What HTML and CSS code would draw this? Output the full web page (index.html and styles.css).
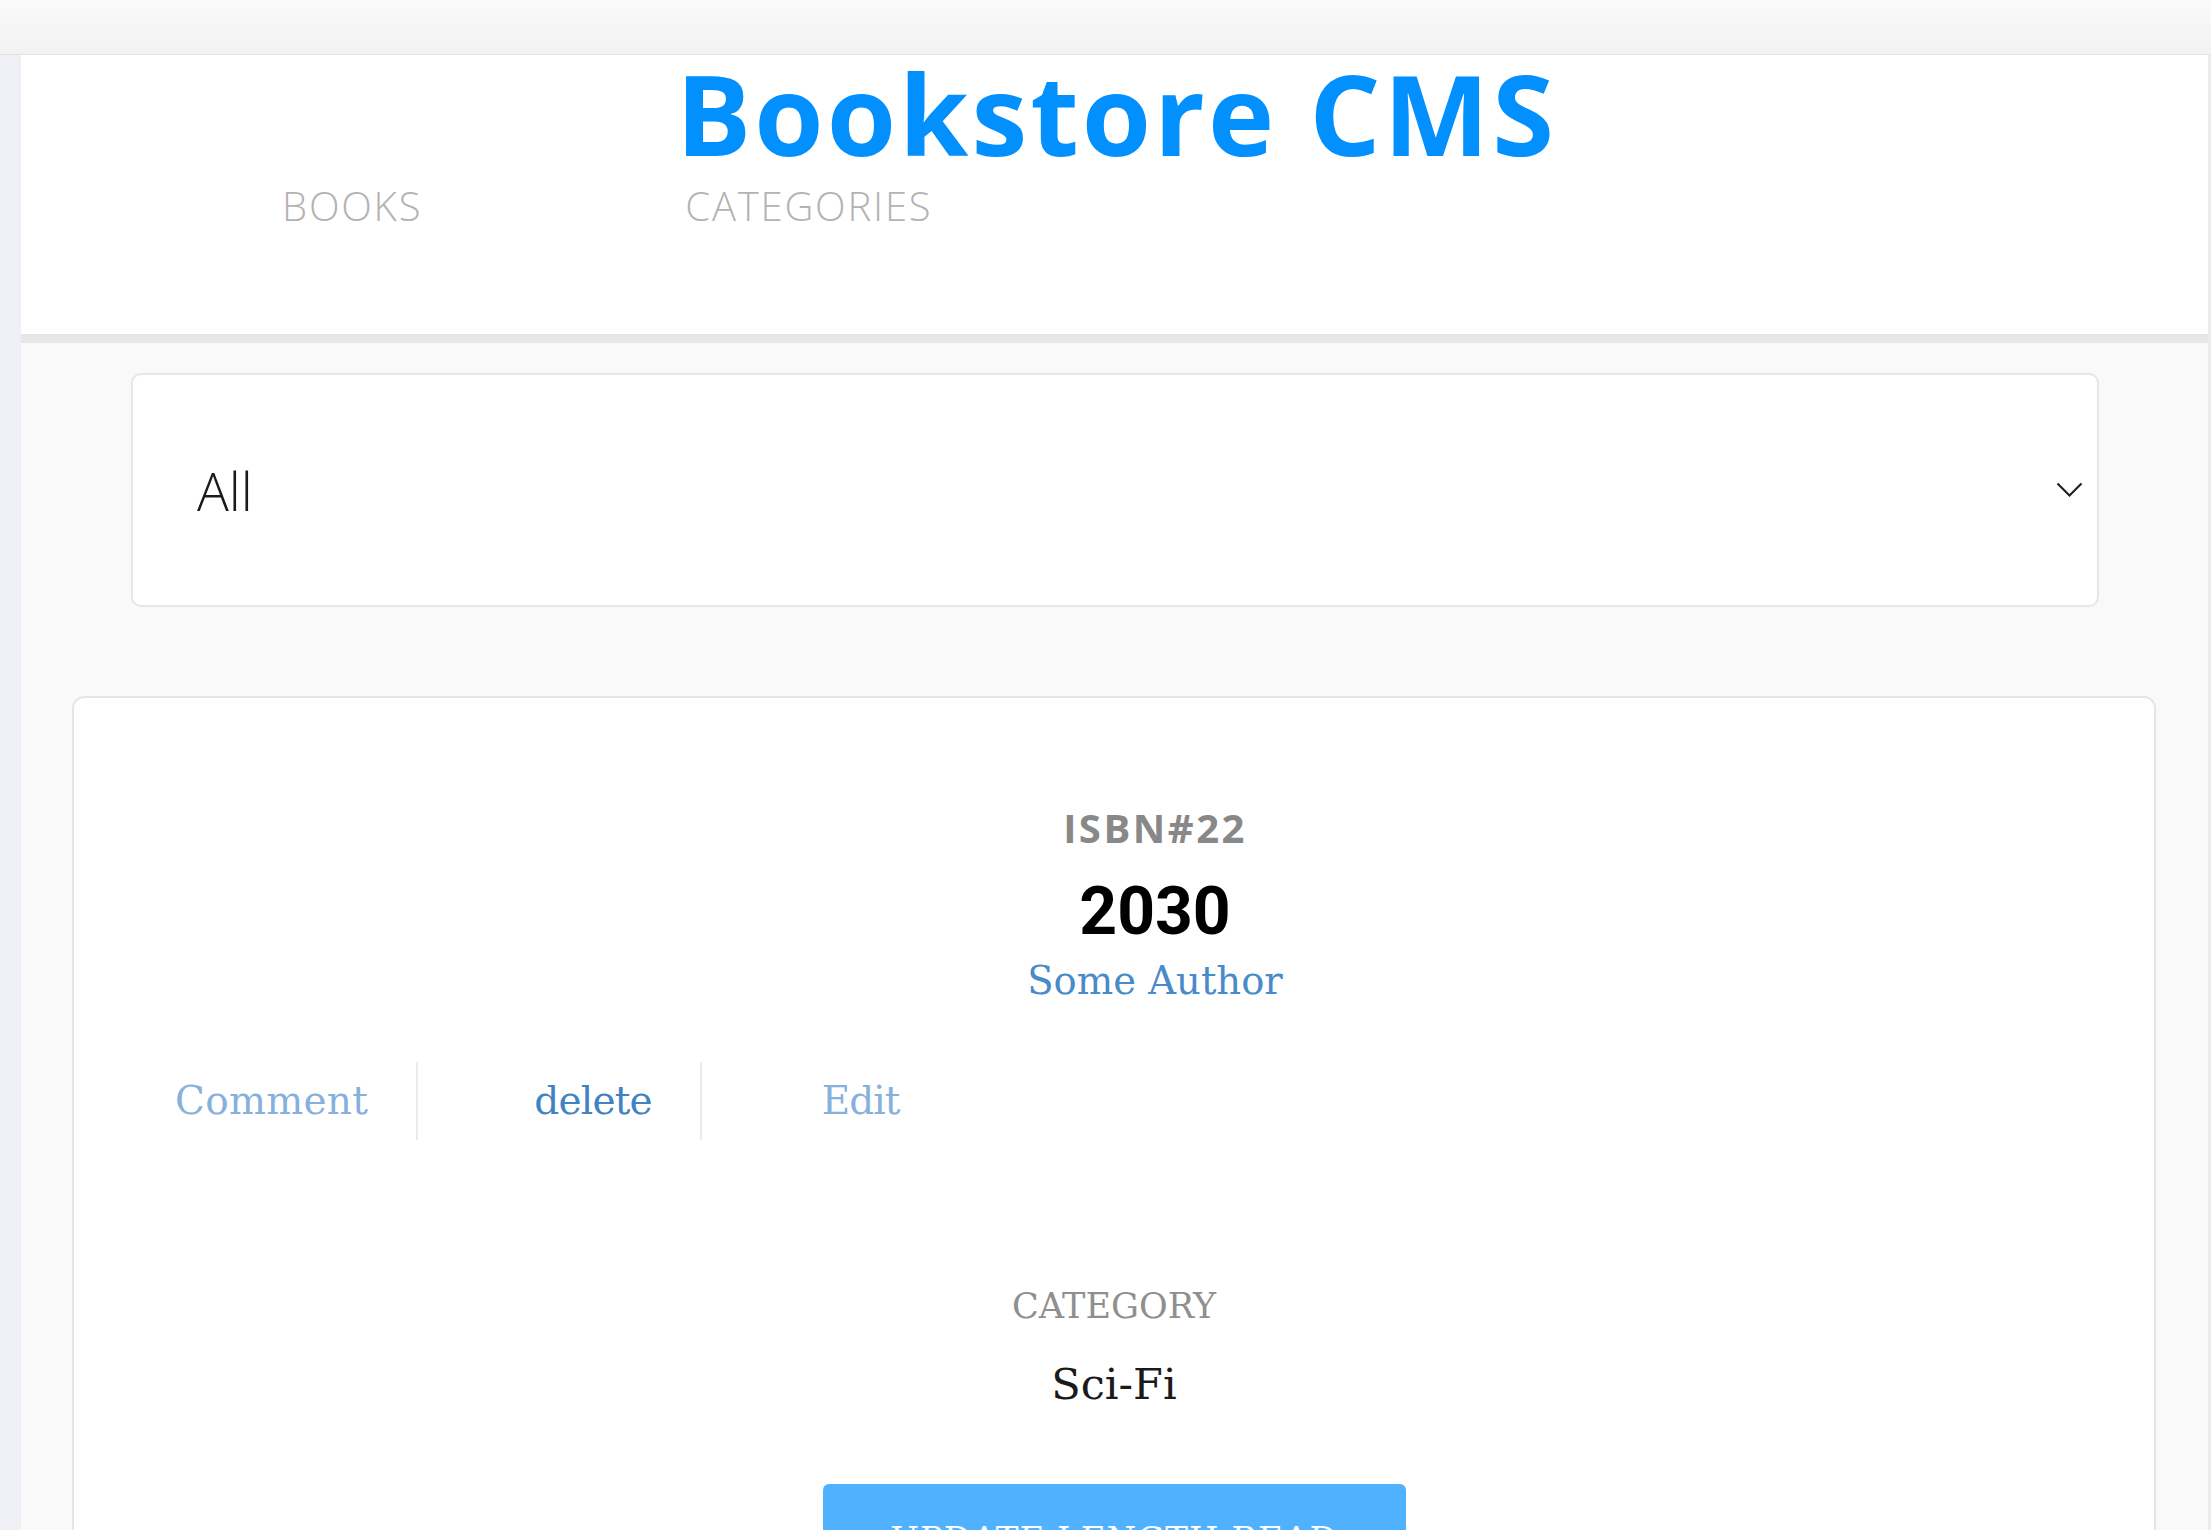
FILE: index.html
```html
<!DOCTYPE html>
<html lang="en">
<head>
<meta charset="utf-8">
<title>Bookstore CMS</title>
<link rel="stylesheet" href="styles.css">
</head>
<body>
<div class="topbar"></div>
<div class="frame">
  <div class="side-strip"></div>
  <div class="page">
    <header class="header">
      <h1 class="title">Bookstore CMS</h1>
      <nav class="nav">
        <a class="nav-link" href="#">BOOKS</a>
        <a class="nav-link" href="#">CATEGORIES</a>
      </nav>
    </header>
    <main class="main">
      <div class="select">
        <span class="select-value">All</span>
        <svg class="chevron" width="27" height="16" viewBox="0 0 27 16"><path d="M1.5 1.5 L13.5 13.5 L25.5 1.5" fill="none" stroke="#222" stroke-width="2.2"/></svg>
      </div>
      <section class="card">
        <div class="book-info">
          <div class="isbn">ISBN#22</div>
          <div class="book-title">2030</div>
          <div class="author">Some Author</div>
        </div>
        <ul class="actions">
          <li class="action action-light">Comment</li>
          <li class="action action-dark">delete</li>
          <li class="action action-light action-edit">Edit</li>
        </ul>
        <div class="category">
          <div class="category-label">CATEGORY</div>
          <div class="category-value">Sci-Fi</div>
          <button class="update-btn">UPDATE LENGTH READ</button>
        </div>
      </section>
    </main>
  </div>
  <div class="right-strip"></div>
</div>
</body>
</html>
```
FILE: styles.css
```css
html, body {
  margin: 0;
  padding: 0;
  height: 100%;
  overflow: hidden;
}
body {
  background: #f9f9f9;
  font-family: "Open Sans", sans-serif;
}
.topbar {
  height: 54px;
  background: linear-gradient(#fafafa, #f2f2f2);
  border-bottom: 1px solid #e2e2e2;
}
.frame {
  display: flex;
  height: calc(100% - 55px);
}
.side-strip {
  width: 21px;
  flex: none;
  background: #eff0f5;
}
.right-strip {
  width: 3px;
  flex: none;
  background: #ececec;
}
.page {
  flex: 1;
  min-width: 0;
  background: #f9f9f9;
}
.header {
  background: #fff;
  height: 279px;
  border-bottom: 9px solid #e6e6e6;
  box-sizing: content-box;
}
.title {
  margin: 0;
  padding: 0 0 0 4px;
  text-align: center;
  font-family: "Open Sans", sans-serif;
  font-weight: 700;
  font-size: 112px;
  line-height: 116px;
  letter-spacing: 3px;
  color: #0290ff;
}
.nav {
  display: flex;
  gap: 263px;
  padding-left: 261px;
  margin-top: 14px;
}
.nav-link {
  font-family: "Open Sans", sans-serif;
  font-weight: 300;
  font-size: 40px;
  line-height: 41px;
  letter-spacing: 1.8px;
  color: #b3b3b3;
  text-decoration: none;
}
.main {
  padding-top: 30px;
}
.select {
  margin: 0 109px 0 110px;
  height: 230px;
  border: 2px solid #e6e6e6;
  border-radius: 10px;
  background: #fff;
  display: flex;
  align-items: center;
  justify-content: space-between;
  padding: 0 14px 0 64px;
}
.select-value {
  font-family: "Open Sans", sans-serif;
  font-weight: 300;
  font-size: 53px;
  color: #1a1a1a;
}
.chevron {
  display: block;
}
.card {
  margin: 89px 52px 0 51px;
  background: #fff;
  border: 2px solid #e6e6e6;
  border-radius: 12px;
  height: 900px;
  padding-top: 106px;
}
.book-info {
  display: flex;
  flex-direction: column;
  align-items: center;
  padding-left: 82px;
}
.isbn {
  font-family: "Open Sans", sans-serif;
  font-weight: 700;
  font-size: 40px;
  line-height: 48px;
  letter-spacing: 2.5px;
  color: #888;
}
.book-title {
  font-family: Roboto, sans-serif;
  font-weight: 700;
  font-size: 66px;
  line-height: 80px;
  color: #000;
  margin-top: 20px;
}
.author {
  font-family: "DejaVu Serif", serif;
  font-size: 38.5px;
  line-height: 46px;
  color: #4a8ac8;
  margin-top: 6px;
}
.actions {
  list-style: none;
  margin: 58px 0 0 101px;
  padding: 0;
  display: flex;
}
.action {
  font-family: "DejaVu Serif", serif;
  font-size: 39px;
  line-height: 78px;
  padding: 0 48px 0 120px;
  border-left: 2px solid #ebebeb;
}
.action:first-child {
  padding-left: 0;
  border-left: none;
  letter-spacing: 0.3px;
}
.action-light {
  color: #85b1dc;
}
.action-dark {
  color: #4282c3;
  letter-spacing: -0.8px;
  padding-left: 116px;
}
.action-edit {
  letter-spacing: -1px;
}
.category {
  display: flex;
  flex-direction: column;
  align-items: center;
  margin-top: 144px;
}
.category-label {
  font-family: "DejaVu Serif", serif;
  font-size: 35px;
  line-height: 44px;
  color: #8f8f8f;
}
.category-value {
  font-family: "DejaVu Serif", serif;
  font-size: 43px;
  line-height: 54px;
  color: #1a1a1a;
  margin-top: 29px;
}
.update-btn {
  margin-top: 73px;
  width: 583px;
  height: 110px;
  border: none;
  border-radius: 6px;
  background: #50b2fe;
  color: #fff;
  font-family: "DejaVu Serif", serif;
  font-size: 34px;
  padding: 0;
  line-height: 96px;
  letter-spacing: 1px;
  align-self: center;
}
```
